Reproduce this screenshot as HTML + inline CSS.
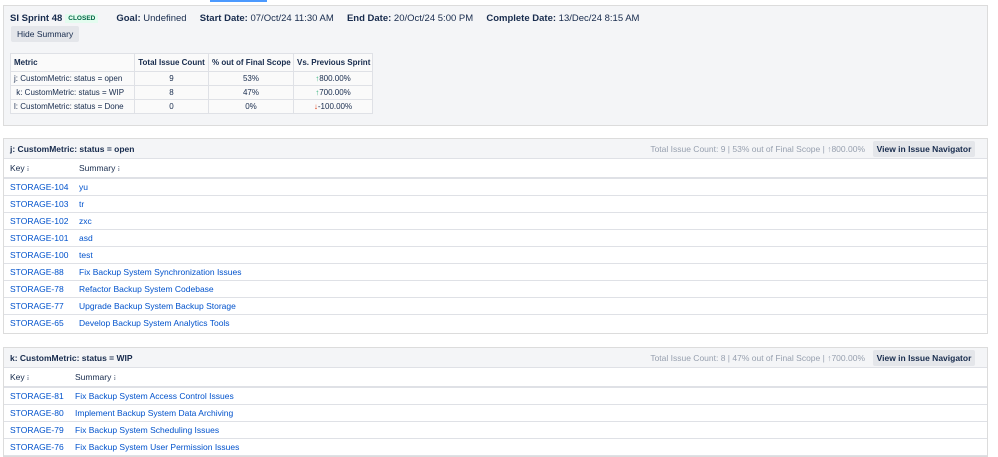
<!DOCTYPE html>
<html><head><style>
*{box-sizing:border-box;margin:0;padding:0}
body{width:998px;height:450px;overflow:hidden;background:#fff;font-family:"Liberation Sans",sans-serif;font-size:8.5px;color:#172b4d;position:relative}
.bar{position:absolute;left:210px;top:0;width:57px;height:2px;background:#4c9aff}
.sum{position:absolute;left:3px;top:5px;width:985px;height:121px;background:#f4f5f7;border:1px solid #dcdcdc}
.hdr{position:absolute;left:6px;top:7px;font-size:9.5px;white-space:nowrap}
.hdr b{font-weight:bold}
.tag{display:inline-block;color:#006644;background:#e3fcef;font-size:6.5px;font-weight:bold;padding:1px 3px;margin:0 18px 0 3px;vertical-align:1px}
.btn{position:absolute;left:7px;top:20px;background:#e4e6ea;padding:3px 6px;font-size:8.5px;border-radius:2px}
table.m{position:absolute;left:6px;top:47px;border-collapse:collapse;background:#fafafa;table-layout:fixed;width:362px}
table.m td,table.m th{border:1px solid #dfe1e6;height:14px;font-size:8px;text-align:center;padding:0 3px;white-space:nowrap;overflow:hidden}
table.m th{height:18px;font-weight:bold}
table.m td:first-child,table.m th:first-child{text-align:left}
.up{color:#36b37e}.dn{color:#de350b}
.panel{position:absolute;left:3px;width:985px;border:1px solid #dcdcdc;background:#fff}
.ph{height:20px;background:#f4f5f7;border-bottom:1px solid #dfe1e6;font-weight:bold;font-size:8.5px;padding:5px 6px;position:relative}
.ph .r{position:absolute;right:122px;top:5px;color:#97a0af;font-weight:normal;white-space:nowrap}
.ph .v{position:absolute;right:12px;top:2px;width:102px;text-align:center;background:#e4e6ea;padding:3px 0;font-weight:bold;border-radius:2px;font-size:8.5px;white-space:nowrap}
.row{height:17px;border-bottom:1px solid #dfe1e6;position:relative;line-height:16px;color:#0052cc}
.row span{position:absolute}
.ch{height:20px;line-height:19px;color:#172b4d;border-bottom:2px solid #dfe1e6}
</style></head><body>
<div class="bar"></div>
<div class="sum">
<div class="hdr"><b>SI Sprint 48</b><span class="tag">CLOSED</span><b>Goal:</b> Undefined &nbsp;&nbsp;&nbsp;&nbsp;<b>Start Date:</b> 07/Oct/24 11:30 AM &nbsp;&nbsp;&nbsp;&nbsp;<b>End Date:</b> 20/Oct/24 5:00 PM &nbsp;&nbsp;&nbsp;&nbsp;<b>Complete Date:</b> 13/Dec/24 8:15 AM</div>
<div class="btn">Hide Summary</div>
<table class="m">
<colgroup><col style="width:124px"><col style="width:74px"><col style="width:85px"><col style="width:79px"></colgroup>
<tr><th>Metric</th><th>Total Issue Count</th><th>% out of Final Scope</th><th>Vs. Previous Sprint</th></tr>
<tr><td>j: CustomMetric: status = open</td><td>9</td><td>53%</td><td><span class="up">↑</span>800.00%</td></tr>
<tr><td>&nbsp;k: CustomMetric: status = WIP</td><td>8</td><td>47%</td><td><span class="up">↑</span>700.00%</td></tr>
<tr><td>l: CustomMetric: status = Done</td><td>0</td><td>0%</td><td><span class="dn">↓</span>-100.00%</td></tr>
</table>
</div>
<div class="panel" style="top:138px;height:196px">
<div class="ph">j: CustomMetric: status = open<span class="r">Total Issue Count: 9 | 53% out of Final Scope | ↑800.00%</span><span class="v">View in Issue Navigator</span></div>
<div class="row ch"><span style="left:6px">Key ፧</span><span style="left:75px">Summary ፧</span></div>
<div class="row"><span style="left:6px">STORAGE-104</span><span style="left:75px">yu</span></div>
<div class="row"><span style="left:6px">STORAGE-103</span><span style="left:75px">tr</span></div>
<div class="row"><span style="left:6px">STORAGE-102</span><span style="left:75px">zxc</span></div>
<div class="row"><span style="left:6px">STORAGE-101</span><span style="left:75px">asd</span></div>
<div class="row"><span style="left:6px">STORAGE-100</span><span style="left:75px">test</span></div>
<div class="row"><span style="left:6px">STORAGE-88</span><span style="left:75px">Fix Backup System Synchronization Issues</span></div>
<div class="row"><span style="left:6px">STORAGE-78</span><span style="left:75px">Refactor Backup System Codebase</span></div>
<div class="row"><span style="left:6px">STORAGE-77</span><span style="left:75px">Upgrade Backup System Backup Storage</span></div>
<div class="row" style="border:0"><span style="left:6px">STORAGE-65</span><span style="left:75px">Develop Backup System Analytics Tools</span></div>
</div>
<div class="panel" style="top:347px;height:110px">
<div class="ph">k: CustomMetric: status = WIP<span class="r">Total Issue Count: 8 | 47% out of Final Scope | ↑700.00%</span><span class="v">View in Issue Navigator</span></div>
<div class="row ch"><span style="left:6px">Key ፧</span><span style="left:71px">Summary ፧</span></div>
<div class="row"><span style="left:6px">STORAGE-81</span><span style="left:71px">Fix Backup System Access Control Issues</span></div>
<div class="row"><span style="left:6px">STORAGE-80</span><span style="left:71px">Implement Backup System Data Archiving</span></div>
<div class="row"><span style="left:6px">STORAGE-79</span><span style="left:71px">Fix Backup System Scheduling Issues</span></div>
<div class="row"><span style="left:6px">STORAGE-76</span><span style="left:71px">Fix Backup System User Permission Issues</span></div>
</div>
</body></html>
